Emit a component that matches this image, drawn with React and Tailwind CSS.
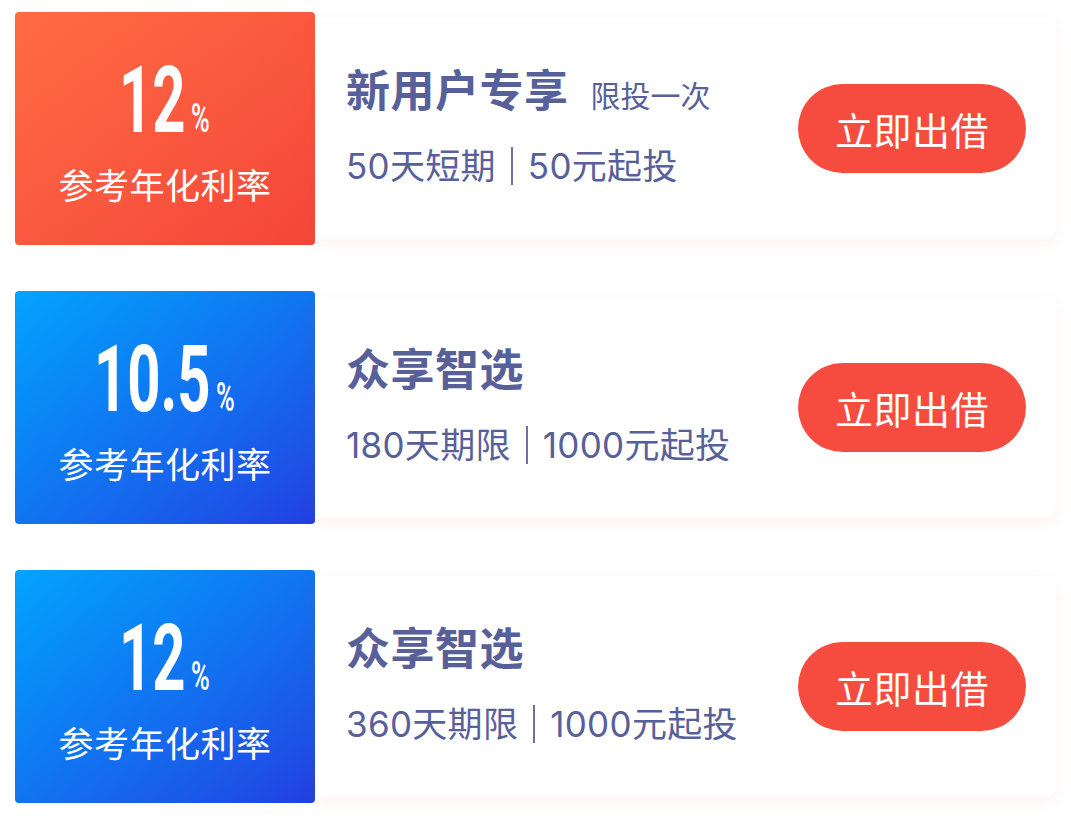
import React from "react";

const cards = [
  {
    box: "bg-linear-to-br from-[#ff6b43] to-[#f4453a]",
    rate: "12",
    title: "新用户专享",
    tag: "限投一次",
    sub1: "50天短期",
    sub2: "50元起投",
  },
  {
    box: "bg-linear-to-br from-[#05a3fe] to-[#223ee2]",
    rate: "10.5",
    title: "众享智选",
    tag: null,
    sub1: "180天期限",
    sub2: "1000元起投",
  },
  {
    box: "bg-linear-to-br from-[#05a3fe] to-[#223ee2]",
    rate: "12",
    title: "众享智选",
    tag: null,
    sub1: "360天期限",
    sub2: "1000元起投",
  },
];

function Rate({ value }) {
  const wide = value.length > 2;
  return (
    <div className="flex items-end leading-none text-white font-bold whitespace-nowrap" style={{ fontFamily: "Roboto, 'Liberation Sans', sans-serif" }}>
      <span className={wide ? "inline-block w-[114px] h-[92px]" : "inline-block w-[64px] h-[92px]"}>
        <span className="inline-block origin-left scale-x-[0.63] text-[92px] leading-[92px]">{value}</span>
      </span>
      <span className="inline-block w-[20px] ml-[8px] mb-[8px] h-[42px]">
        <span className="inline-block origin-left scale-x-[0.62] text-[41px] leading-[42px] font-medium">%</span>
      </span>
    </div>
  );
}

export default function App() {
  return (
    <div
      className="w-[1071px] min-h-[816px] bg-white px-[15px] pt-[12px] flex flex-col gap-[46px]"
      style={{ fontFamily: "Inter, 'Noto Sans CJK SC', sans-serif" }}
    >
      {cards.map((c, i) => (
        <div key={i} className="flex h-[233px]">
          <div className={`w-[300px] h-[233px] shrink-0 rounded-[4px] flex flex-col items-center justify-center ${c.box}`}>
            <div>
              <Rate value={c.rate} />
            </div>
            <div className="mt-[19px] text-white text-[35px] leading-[36px] tracking-[0.5px]" style={{ fontFamily: "'Noto Sans CJK SC', sans-serif" }}>
              参考年化利率
            </div>
          </div>
          <div className="flex-1 my-[6px] bg-white rounded-r-[12px] shadow-[0_4px_14px_rgba(245,80,70,0.08)] flex items-center justify-between pl-[31px] pr-[30px]">
            <div className="flex flex-col text-[#58609a] mt-[-8px]">
              <div className="flex items-baseline">
                <span className="text-[44px] leading-[46px] font-bold tracking-[0.5px]" style={{ fontFamily: "'Noto Sans CJK SC', sans-serif" }}>{c.title}</span>
                {c.tag && (
                  <span className="ml-[22px] text-[30px] leading-[30px]" style={{ fontFamily: "'Noto Sans CJK SC', sans-serif" }}>{c.tag}</span>
                )}
              </div>
              <div className="mt-[36px] flex items-center text-[35px] leading-[38px] tracking-[0.3px]">
                <span>{c.sub1}</span>
                <span className="inline-block w-[2px] h-[38px] bg-[#6a71a4] mx-[15px]"></span>
                <span>{c.sub2}</span>
              </div>
            </div>
            <button className="w-[228px] h-[89px] rounded-full bg-[#f54c3f] text-white text-[38px] leading-none tracking-[0.5px]" style={{ fontFamily: "'Noto Sans CJK SC', sans-serif" }}>
              立即出借
            </button>
          </div>
        </div>
      ))}
    </div>
  );
}
